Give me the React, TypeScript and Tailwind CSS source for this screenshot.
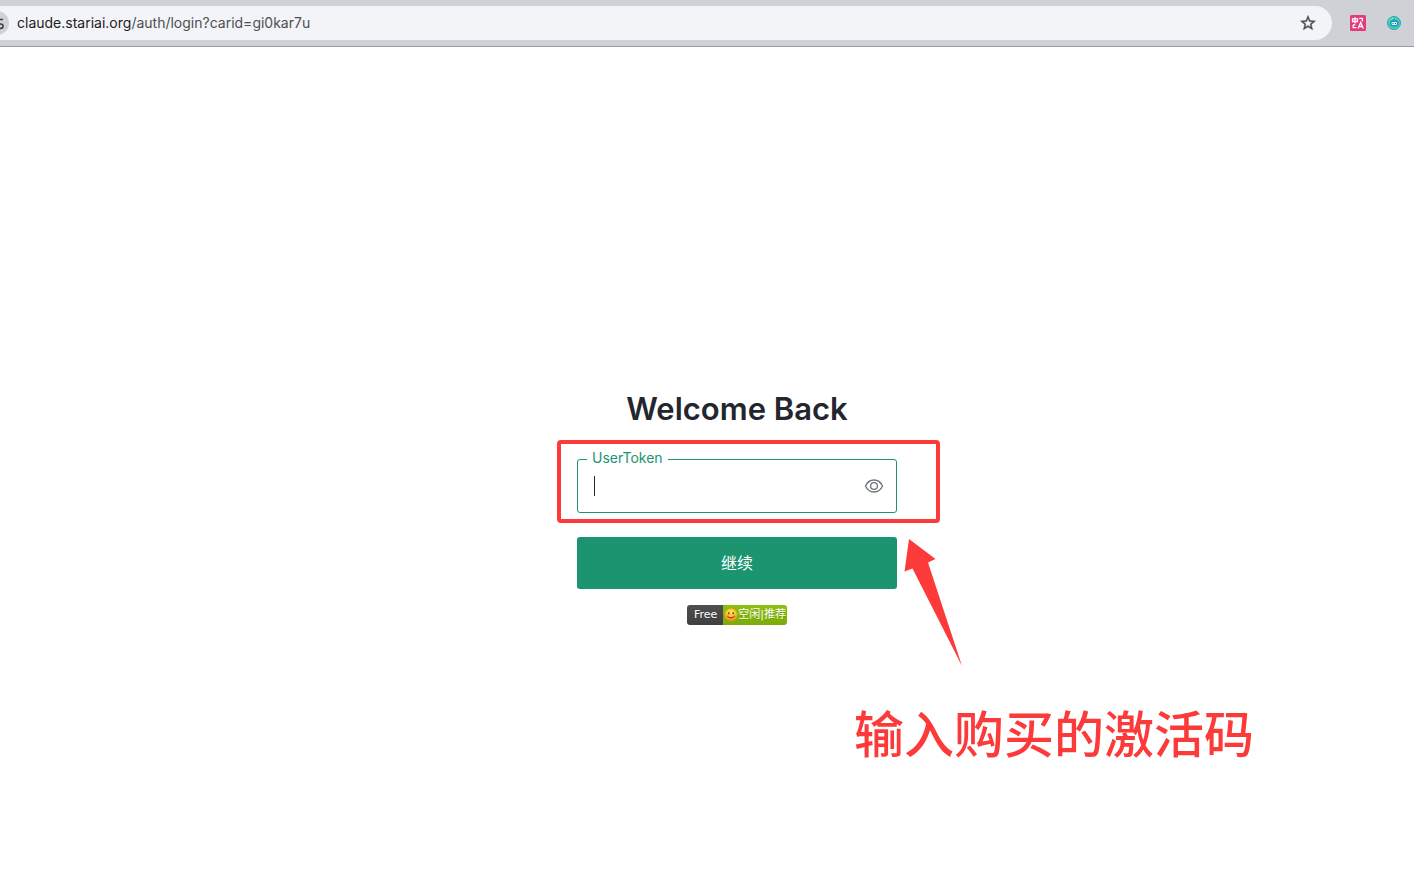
import React, { useState } from "react";

const ANNOTATION_COLOR = "#fd3a3a";

const StarIcon = () => (
  <svg
    viewBox="0 0 24 24"
    className="h-[18px] w-[18px] fill-[#4a4d51] stroke-[#4a4d51] stroke-[0.6]"
  >
    <path d="M22 9.24l-7.19-.62L12 2 9.19 8.63 2 9.24l5.46 4.73L5.82 21 12 17.27 18.18 21l-1.63-7.03L22 9.24zM12 15.4l-3.76 2.27 1-4.28-3.32-2.88 4.38-.38L12 6.1l1.71 4.04 4.38.38-3.32 2.88 1 4.28L12 15.4z" />
  </svg>
);

const SiteInfoIcon = () => (
  <svg
    viewBox="0 0 16 16"
    className="h-4 w-4 fill-none stroke-[#3c4043] stroke-[1.6]"
  >
    <path d="M7.5 4.5H14M2 11.2h7" />
    <circle cx="4.2" cy="4.5" r="2" />
    <circle cx="11.8" cy="11.2" r="2.2" />
  </svg>
);

const TranslateIcon = () => (
  <svg viewBox="0 0 16 16" className="h-4 w-4">
    <rect width="16" height="16" rx="1.5" fill="#e6397a" />
    <g fill="none" stroke="#fff" strokeWidth="1.3">
      <path d="M2.5 3.8h5v2.7h-5zM5 2.2v6.2" />
      <path d="M9.2 3.4h3.2v3M3 9.8h2.4M3.2 9.8v2.8h3.2" />
      <path d="M8.1 13.4l2.6-6 2.6 6M9 11.500h3.400" />
    </g>
  </svg>
);

const RobotIcon = () => (
  <svg viewBox="0 0 16 16" className="h-4 w-4">
    <circle cx="8" cy="8" r="6.500" fill="#48d58c" stroke="#269ce8" />
    <path d="M3.500 6Q5.500 2.600 9.500 3.200" fill="none" stroke="#8aeaa8" />
    <path d="M8.500 3.400L7.500 5.500" stroke="#1173b5" />
    <rect x="4" y="5.200" width="8.500" height="6.300" rx="2.200" fill="#1c93da" />
    <rect x="5.500" y="7" width="5.500" height="3" rx="1" fill="#d5f4ff" />
    <path d="M6.500 8.500h1M9 8.500h1" stroke="#0d5b94" />
  </svg>
);

const EyeIcon = () => (
  <svg
    viewBox="0 0 20 16"
    className="h-4 w-5 fill-none stroke-[#6b737f] stroke-[1.3]"
  >
    <path d="M1.5 8C3.2 4.2 6.3 2 10 2s6.8 2.2 8.5 6c-1.7 3.8-4.8 6-8.5 6S3.2 11.8 1.5 8z" />
    <circle cx="10" cy="8" r="3.4" />
  </svg>
);

const SmileIcon = () => (
  <svg viewBox="0 0 14 14" className="h-[14px] w-[14px]">
    <defs>
      <radialGradient id="face" cx="0.5" cy="0.3" r="0.7">
        <stop offset="0" stopColor="#ffe45c" />
        <stop offset="0.6" stopColor="#fdb827" />
        <stop offset="1" stopColor="#f0781e" />
      </radialGradient>
    </defs>
    <circle cx="7" cy="7" r="6.4" fill="url(#face)" />
    <ellipse cx="4.8" cy="5.3" rx="0.8" ry="1.1" fill="#6b3410" />
    <ellipse cx="9.2" cy="5.3" rx="0.8" ry="1.1" fill="#6b3410" />
    <path
      d="M3.5 8.3Q7 11.8 10.5 8.3"
      fill="none"
      stroke="#6b3410"
      strokeLinecap="round"
    />
  </svg>
);

const BrowserBar = () => (
  <header className="flex items-center border-b border-[#9b9ca2] bg-[#d0d1d7] py-[6px] pr-3">
    <div className="flex h-[34px] flex-1 items-center overflow-hidden rounded-r-full bg-[#f3f4f7] pr-[15px]">
      <button
        type="button"
        aria-label="Site information"
        className="-ml-[15px] flex h-6 w-6 shrink-0 items-center justify-center rounded-full bg-[#d0d1d7]"
      >
        <SiteInfoIcon />
      </button>
      <div className="ml-2 flex-1 font-['Inter',sans-serif] text-sm text-[#4d4f52]">
        <span className="text-[#1f2023]">claude.stariai.org</span>
        /auth/login?carid=gi0kar7u
      </div>
      <button type="button" aria-label="Bookmark">
        <StarIcon />
      </button>
    </div>
    <div className="ml-[18px] flex gap-5">
      <button type="button" aria-label="Translate">
        <TranslateIcon />
      </button>
      <button type="button" aria-label="Assistant">
        <RobotIcon />
      </button>
    </div>
  </header>
);

const StatusBadge = () => (
  <div className="flex h-5 overflow-hidden rounded-[3px] font-['DejaVu_Sans','Noto_Sans_CJK_SC',sans-serif] text-[11px] leading-5 text-white">
    <span className="bg-linear-to-b from-[#4f4f4f] to-[#404040] pr-[6px] pl-[7px] text-shadow-2xs">
      Free
    </span>
    <span className="flex items-center bg-linear-to-b from-[#8dc010] to-[#7cab08] px-px text-shadow-2xs">
      <SmileIcon />
      空闲|推荐
    </span>
  </div>
);

// Red frame, arrow and caption drawn over the form
const Annotation = () => (
  <div className="pointer-events-none">
    <div className="absolute -top-[19px] -right-[43px] -bottom-[10px] -left-5 rounded-[4px] border-4 border-[#fd3a3a]" />
    <svg
      viewBox="0 0 58 128"
      className="absolute top-[79px] left-[327px] h-[128px] w-[58px]"
    >
      <path
        d="M5 1L31.5 21L24 24.5L58 128L8.5 30.5L0.5 33.5z"
        fill={ANNOTATION_COLOR}
      />
    </svg>
    <p className="absolute top-[236px] left-[277px] font-['Noto_Sans_CJK_SC',sans-serif] text-[50px] leading-[72px] font-medium whitespace-nowrap text-[#fd3a3a]">
      输入购买的激活码
    </p>
  </div>
);

const App = () => {
  const [token, setToken] = useState("");
  const [isVisible, setIsVisible] = useState(false);

  const handleSubmit = (event: React.FormEvent<HTMLFormElement>) => {
    event.preventDefault();
  };

  return (
    <div className="min-h-screen overflow-hidden bg-white">
      <BrowserBar />
      <main className="flex flex-col items-center pt-[342px] pl-[60px]">
        <h1 className="font-['Inter',sans-serif] text-[31px] leading-10 font-semibold text-[#23262d]">
          Welcome Back
        </h1>
        <form onSubmit={handleSubmit} className="mt-[30px] w-80">
          <div className="relative">
            <div className="flex h-[54px] items-center rounded-[3px] border border-[#1b946f] pr-3 pb-px pl-4">
              <label
                htmlFor="token"
                className="absolute -top-[11px] left-[10px] bg-white px-[5px] font-['Inter',sans-serif] text-sm leading-5 text-[#1b946f]"
              >
                UserToken
              </label>
              {token === "" && <span className="h-5 w-px bg-[#23262d]" />}
              <input
                id="token"
                type={isVisible ? "text" : "password"}
                value={token}
                onChange={(e) => setToken(e.target.value)}
                className="h-full min-w-0 flex-1 bg-transparent outline-none"
              />
              <button
                type="button"
                aria-label="Show token"
                onClick={() => setIsVisible(!isVisible)}
              >
                <EyeIcon />
              </button>
            </div>
            <Annotation />
          </div>
          <button
            type="submit"
            className="mt-6 h-[52px] w-full rounded-[3px] bg-[#1b946f] pb-0.5 font-['Noto_Sans_CJK_SC',sans-serif] text-base text-white"
          >
            继续
          </button>
        </form>
        <div className="mt-4">
          <StatusBadge />
        </div>
      </main>
    </div>
  );
};

export default App;
